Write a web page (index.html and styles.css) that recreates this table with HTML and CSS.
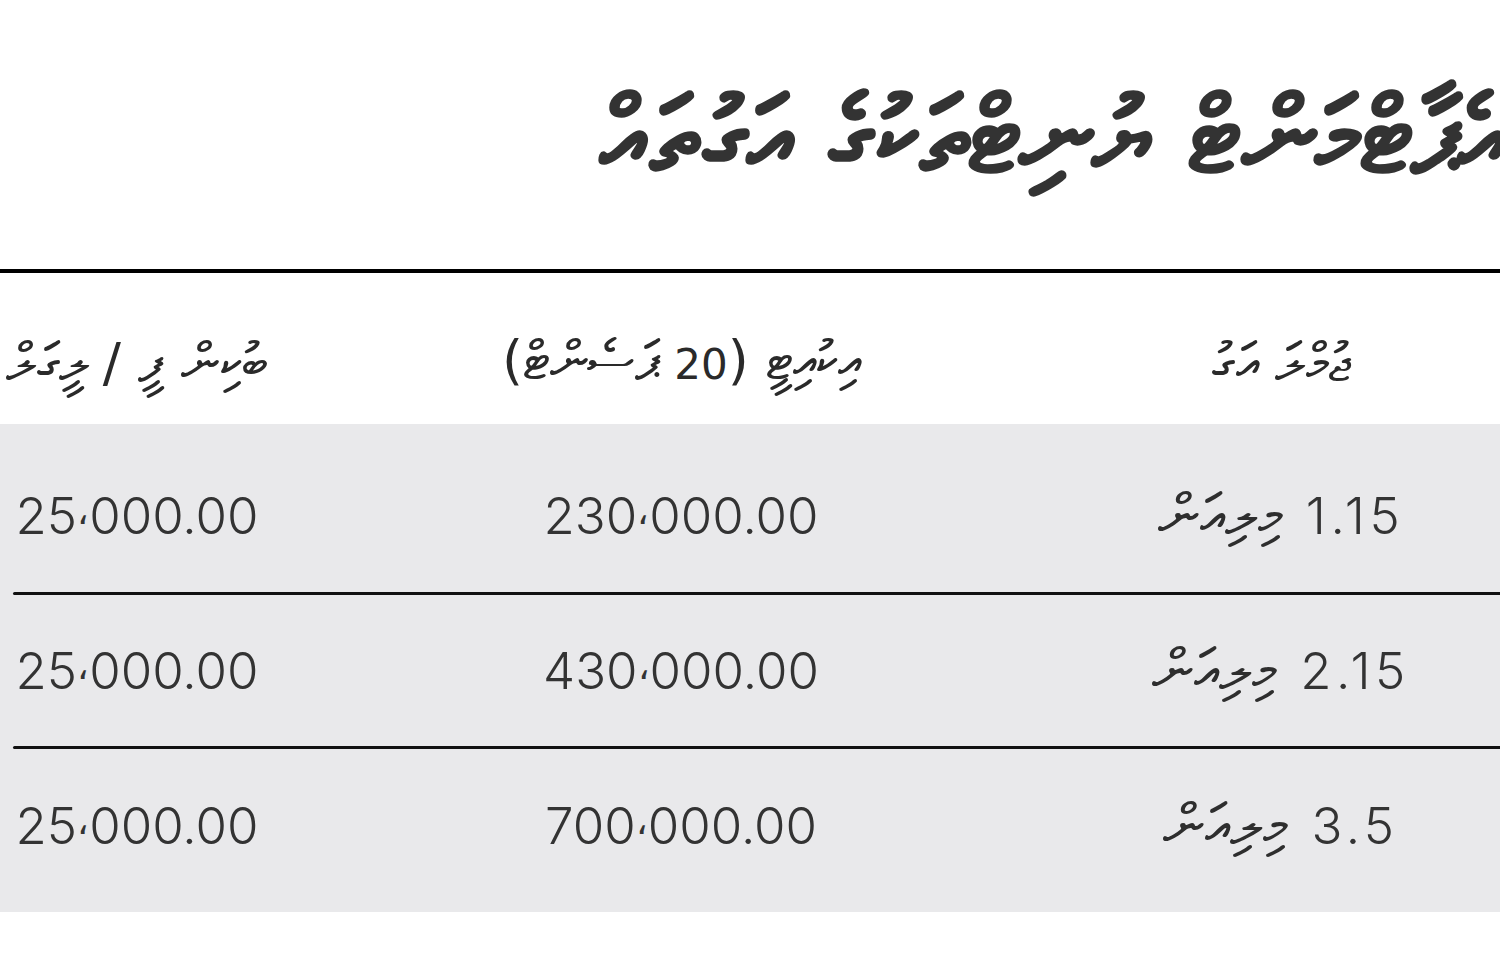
FILE: index.html
```html
<!DOCTYPE html>
<html lang="dv" dir="rtl">
<head>
<meta charset="utf-8">
<title>އަގުތައް</title>
<link rel="stylesheet" href="styles.css">
</head>
<body>
<div class="page">
  <header class="title-bar">
    <h1 class="title">އެޕާޓްމަންޓް ޔުނިޓްތަކުގެ އަގުތައް</h1>
  </header>
  <div class="rule"></div>
  <div class="thead">
    <div class="cell head">ޖުމްލަ އަގު</div>
    <div class="cell head">އިކުއިޓީ (<span class="hnum" lang="en">20</span> ޕަސެންޓް)</div>
    <div class="cell head">ބުކިން ފީ / ލީގަލް</div>
  </div>
  <div class="tbody">
    <div class="row">
      <div class="cell"><span class="num" lang="en">1.15</span> <span class="unit">މިލިއަން</span></div>
      <div class="cell"><span class="num" lang="en">230<span class="cm">،</span>000.00</span></div>
      <div class="cell"><span class="num" lang="en">25<span class="cm">،</span>000.00</span></div>
    </div>
    <div class="sep"></div>
    <div class="row r2">
      <div class="cell"><span class="num" lang="en">2.15</span> <span class="unit">މިލިއަން</span></div>
      <div class="cell"><span class="num" lang="en">430<span class="cm">،</span>000.00</span></div>
      <div class="cell"><span class="num" lang="en">25<span class="cm">،</span>000.00</span></div>
    </div>
    <div class="sep"></div>
    <div class="row r3">
      <div class="cell"><span class="num" lang="en">3.5</span> <span class="unit">މިލިއަން</span></div>
      <div class="cell"><span class="num" lang="en">700<span class="cm">،</span>000.00</span></div>
      <div class="cell"><span class="num" lang="en">25<span class="cm">،</span>000.00</span></div>
    </div>
  </div>
</div>
</body>
</html>
```
FILE: styles.css
```css
html, body {
  margin: 0;
  padding: 0;
  background: #ffffff;
}
body {
  width: 1500px;
  height: 968px;
  overflow: hidden;
  font-family: "DejaVu Sans", "Noto Sans", sans-serif;
  color: #2e2e2e;
}
.page {
  width: 1500px;
  direction: rtl;
}
.title-bar {
  height: 269px;
  display: flex;
  direction: ltr;
  padding-left: 600px;
  overflow: hidden;
  box-sizing: border-box;
}
.title {
  margin: 0;
  padding-top: 76px;
  font-size: 106px;
  font-weight: bold;
  line-height: 120px;
  white-space: nowrap;
  direction: rtl;
  color: #333333;
  flex: none;
}
.rule {
  height: 4px;
  background: #000000;
}
.thead {
  height: 151px;
  display: grid;
  grid-template-columns: 386px 814px 1fr;
  padding-right: 26px;
  align-items: center;
}
.cell {
  display: flex;
  justify-content: center;
  align-items: center;
  gap: 24px;
  white-space: nowrap;
}
.head {
  display: block;
  text-align: center;
  font-size: 54px;
  line-height: 80px;
  padding-top: 28px;
  color: #2a2a2a;
}
.hnum {
  font-size: 42px;
}
.tbody {
  background: #e9e9eb;
  padding-top: 14px;
  padding-bottom: 10px;
}
.row {
  height: 154px;
  display: grid;
  grid-template-columns: 386px 814px 1fr;
  padding-right: 26px;
  align-items: center;
}
.row.r2 { height: 151px; }
.row.r3 { height: 153px; }
.sep {
  height: 3px;
  margin-left: 13px;
  background: #111111;
  border-radius: 2px 0 0 2px;
}
.num {
  font-family: "Inter", "Liberation Sans", sans-serif;
  font-weight: 300;
  font-size: 51px;
  letter-spacing: 4.5px;
  direction: ltr;
  color: #333333;
}
.cm {
  font-family: "DejaVu Sans", sans-serif;
  font-size: 36px;
  vertical-align: 10px;
  letter-spacing: 4px;
}
.unit {
  font-size: 58px;
  color: #2e2e2e;
}
```
